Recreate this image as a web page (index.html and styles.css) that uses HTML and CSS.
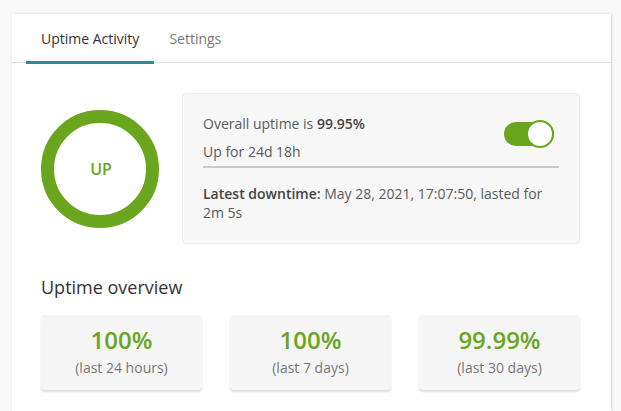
FILE: index.html
```html
<!DOCTYPE html>
<html>
<head>
<meta charset="utf-8">
<link rel="stylesheet" href="styles.css">
</head>
<body>
<div class="card">
  <div class="tabs">
    <div class="tab active">Uptime Activity</div>
    <div class="tab">Settings</div>
  </div>
  <div class="content">
    <div class="status-row">
      <div class="ring"><span>UP</span></div>
      <div class="info">
        <div class="info-top">
          <div class="info-lines">
            <div class="line">Overall uptime is <span class="strong">99.95%</span></div>
            <div class="line second">Up for 24d 18h</div>
          </div>
          <div class="toggle"><div class="knob"></div></div>
        </div>
        <p class="latest"><span class="strong">Latest downtime:</span> May 28, 2021, 17:07:50, lasted for 2m 5s</p>
      </div>
    </div>
    <h2 class="heading">Uptime overview</h2>
    <div class="stats">
      <div class="stat"><div class="value">100%</div><div class="label">(last 24 hours)</div></div>
      <div class="stat"><div class="value">100%</div><div class="label">(last 7 days)</div></div>
      <div class="stat"><div class="value">99.99%</div><div class="label">(last 30 days)</div></div>
    </div>
  </div>
</div>
</body>
</html>
```
FILE: styles.css
```css
html, body {
  margin: 0;
  padding: 0;
  background: #f8f8f8;
  font-family: "Open Sans", "Liberation Sans", sans-serif;
  overflow: hidden;
}
.card {
  margin: 14px 0 0 12px;
  width: 599px;
  height: 397px;
  background: #fff;
  box-shadow: 0 0 3px rgba(0,0,0,0.08), 2px 0 2px rgba(0,0,0,0.06);
}
.tabs {
  display: flex;
  padding-left: 14px;
  height: 48px;
  border-bottom: 1px solid #e2e2e2;
}
.tab {
  padding: 0 15px;
  font-size: 14px;
  line-height: 50px;
  color: #777;
  height: 49px;
  box-sizing: border-box;
}
.tab.active {
  color: #333;
  border-bottom: 3px solid #2f8a96;
  height: 50px;
  line-height: 50px;
}
.content {
  padding: 30px 31px 0 29px;
}
.status-row {
  display: flex;
  align-items: center;
  gap: 23px;
}
.ring {
  width: 118px;
  height: 118px;
  box-sizing: border-box;
  border: 13px solid #6aa51e;
  border-radius: 50%;
  display: flex;
  align-items: center;
  justify-content: center;
  flex: none;
}
.ring span {
  color: #6aa51e;
  font-size: 16px;
  font-weight: 600;
  margin-left: 2px;
}
.info {
  flex: 1;
  background: #f7f7f7;
  border: 1px solid #ececec;
  border-radius: 4px;
  padding: 21px 20px 21px 20px;
  font-size: 14px;
  color: #5a5a5a;
}
.strong {
  font-weight: 600;
  color: #444;
}
.info-top {
  display: flex;
  justify-content: space-between;
  align-items: flex-start;
  border-bottom: 2px solid #c9c9c9;
  padding-bottom: 5px;
}
.line {
  line-height: 18px;
}
.line.second {
  margin-top: 10px;
}
.toggle {
  margin-top: 7px;
  margin-right: 5px;
  width: 50px;
  height: 24px;
  background: #6aa51e;
  border-radius: 12px;
  position: relative;
}
.knob {
  position: absolute;
  right: 0;
  top: -2px;
  width: 28px;
  height: 28px;
  box-sizing: border-box;
  border: 2px solid #6aa51e;
  border-radius: 50%;
  background: #fff;
}
.latest {
  margin: 16px 0 0;
  line-height: 19px;
}
.heading {
  margin: 31px 0 16px 0;
  font-size: 18px;
  font-weight: 400;
  line-height: 24px;
  color: #333;
}
.stats {
  display: grid;
  grid-template-columns: 161px 161px 161px;
  gap: 28px;
}
.stat {
  background: #f5f5f5;
  border-radius: 4px;
  box-shadow: 0 2px 2px rgba(0,0,0,0.13);
  text-align: center;
  padding: 10px 0 0;
  height: 75px;
  box-sizing: border-box;
}
.value {
  font-size: 24px;
  font-weight: 600;
  color: #6aa51e;
  line-height: 30px;
}
.label {
  margin-top: 3px;
  font-size: 14px;
  line-height: 19px;
  color: #777;
}
```
